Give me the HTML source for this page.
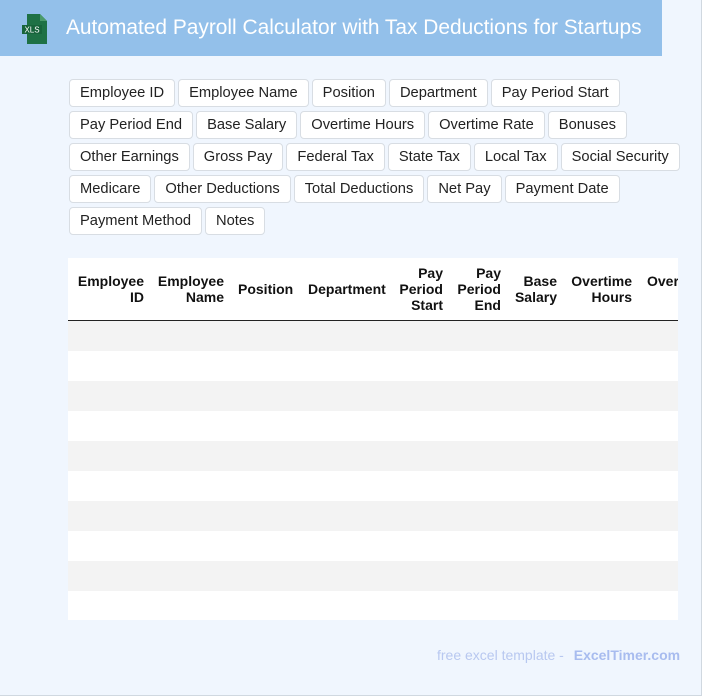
<!DOCTYPE html>
<html><head><style>
*{margin:0;padding:0;box-sizing:border-box}
body{width:702px;height:696px;background:#f0f6fe;font-family:"Liberation Sans",Arial,sans-serif;position:relative;overflow:hidden;border-right:1px solid #d0d8e0;border-bottom:1px solid #d0d8e0}
.hdr{position:absolute;left:0;top:0;width:662px;height:56px;background:#93c0ea}
.hdr h1{position:absolute;left:66px;top:16px;font-size:20.9px;font-weight:normal;color:#fff;white-space:nowrap}
.tags{position:absolute;left:69px;top:79px;width:620px}
.row{display:flex;height:28px;margin-bottom:4px}
.tag{height:28px;line-height:26px;padding:0 10px;border:1px solid #d8dde3;border-radius:4px;background:#fff;font-size:14.7px;color:#222;margin-right:3px;white-space:nowrap}
.tbl{position:absolute;left:68px;top:258px;width:610px;height:362px;background:#fff;overflow:hidden}
.th{position:absolute;font-weight:bold;font-size:14px;line-height:16px;text-align:right;color:#111;white-space:nowrap}
.line{position:absolute;left:0;top:62px;width:610px;height:1px;background:#222}
.stripe{position:absolute;left:0;width:610px;height:30px;background:#f3f3f3}
.foot{position:absolute;left:437px;top:647px;font-size:14px;color:#b8c8f0}
.foot b{color:#a8bcef;margin-left:6px}
</style></head><body>
<div class="hdr">
<svg style="position:absolute;left:21px;top:14px" width="30" height="30" viewBox="0 0 30 30">
<path d="M6 0H19L26 7V30H6Z" fill="#1e7145"/><path d="M19 0V7H26Z" fill="#4a9a6a"/>
<rect x="1" y="11" width="20" height="9" fill="#17643b"/>
<text x="11" y="18.5" font-size="8" fill="#fff" text-anchor="middle" font-family="Liberation Sans">XLS</text>
</svg>
<h1>Automated Payroll Calculator with Tax Deductions for Startups</h1>
</div>
<div class="tags">
<div class="row"><span class="tag">Employee ID</span><span class="tag">Employee Name</span><span class="tag">Position</span><span class="tag">Department</span><span class="tag">Pay Period Start</span></div>
<div class="row"><span class="tag">Pay Period End</span><span class="tag">Base Salary</span><span class="tag">Overtime Hours</span><span class="tag">Overtime Rate</span><span class="tag">Bonuses</span></div>
<div class="row"><span class="tag">Other Earnings</span><span class="tag">Gross Pay</span><span class="tag">Federal Tax</span><span class="tag">State Tax</span><span class="tag">Local Tax</span><span class="tag">Social Security</span></div>
<div class="row"><span class="tag">Medicare</span><span class="tag">Other Deductions</span><span class="tag">Total Deductions</span><span class="tag">Net Pay</span><span class="tag">Payment Date</span></div>
<div class="row"><span class="tag">Payment Method</span><span class="tag">Notes</span></div>
</div>
<div class="tbl">
<div class="th" style="right:534px;top:15px">Employee<br>ID</div>
<div class="th" style="right:454px;top:15px">Employee<br>Name</div>
<div class="th" style="left:170px;top:23px">Position</div>
<div class="th" style="left:240px;top:23px">Department</div>
<div class="th" style="right:235px;top:7px">Pay<br>Period<br>Start</div>
<div class="th" style="right:177px;top:7px">Pay<br>Period<br>End</div>
<div class="th" style="right:121px;top:15px">Base<br>Salary</div>
<div class="th" style="right:46px;top:15px">Overtime<br>Hours</div>
<div class="th" style="left:579px;top:15px;text-align:left">Overtime</div>
<div class="line"></div>
<div class="stripe" style="top:63px"></div>
<div class="stripe" style="top:123px"></div>
<div class="stripe" style="top:183px"></div>
<div class="stripe" style="top:243px"></div>
<div class="stripe" style="top:303px"></div>
</div>
<div class="foot">free excel template - <b>ExcelTimer.com</b></div>
</body></html>
